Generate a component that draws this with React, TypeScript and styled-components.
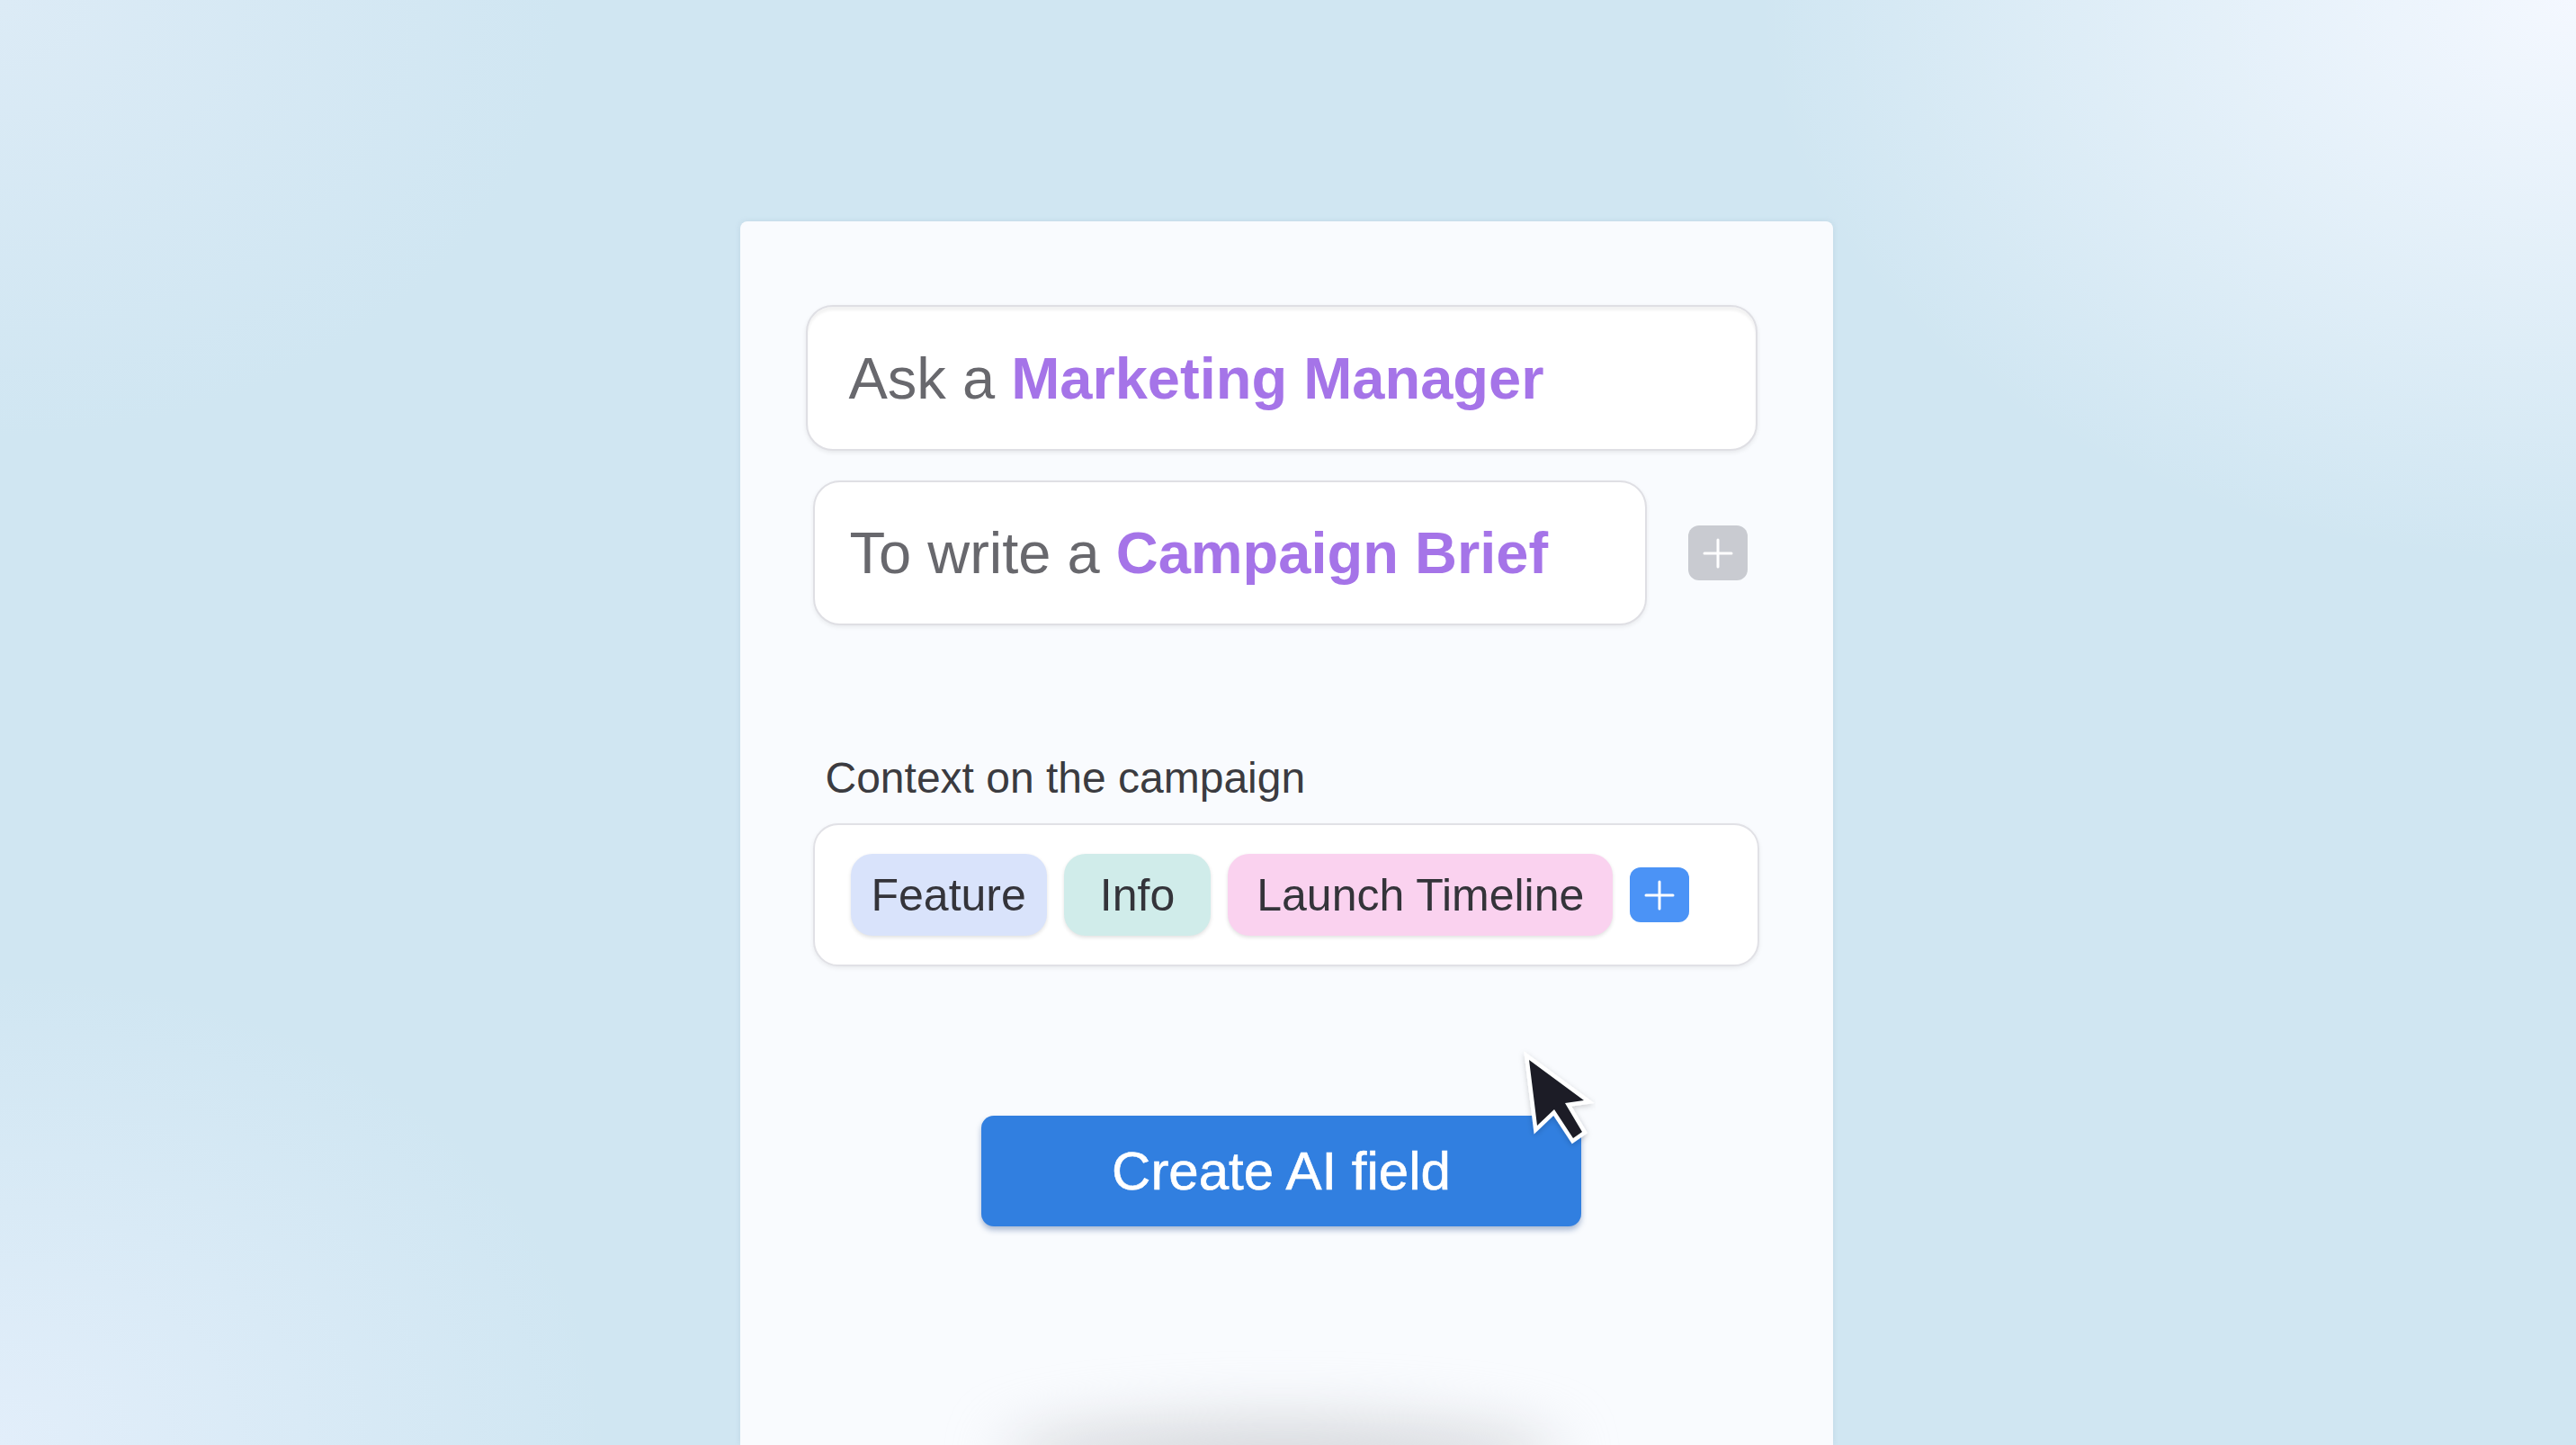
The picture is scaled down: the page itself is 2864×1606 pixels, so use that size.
import React from "react";
import styled, { createGlobalStyle } from "styled-components";

const GlobalStyle = createGlobalStyle`
  html, body {
    margin: 0;
    padding: 0;
    height: 100%;
  }
  body {
    overflow: hidden;
    font-family: "Liberation Sans", Arial, sans-serif;
  }
`;

const tags = [
  { label: "Feature", bg: "#d9e3fb", pad: 23 },
  { label: "Info", bg: "#d0ecea", pad: 40 },
  { label: "Launch Timeline", bg: "#fad2ef", pad: 32 },
];

const PlusIcon = ({ color }: { color: string }) => (
  <svg width="34" height="34" viewBox="0 0 34 34">
    <path d="M17 2v30M2 17h30" stroke={color} strokeWidth="3" strokeLinecap="round" />
  </svg>
);

const Cursor = () => (
  <svg width="140" height="150" viewBox="0 0 140 150">
    <defs>
      <filter id="cs" x="-20%" y="-20%" width="140%" height="140%">
        <feDropShadow dx="0" dy="2" stdDeviation="3" floodColor="#000" floodOpacity="0.18" />
      </filter>
    </defs>
    <path
      d="M39 37 L100 82 L79 85 L98 117 L88 124 L67 92 L48 110 Z"
      fill="#1b1f27"
      stroke="#ffffff"
      strokeWidth="9"
      strokeLinejoin="miter"
      paintOrder="stroke"
      filter="url(#cs)"
    />
  </svg>
);

const App = () => {
  return (
    <Page>
      <GlobalStyle />
      <Card>
        <Column>
          <PromptField inset pad={46}>
            <Muted>Ask a&nbsp;</Muted>
            <Accent>Marketing Manager</Accent>
          </PromptField>

          <SecondRow>
            <PromptField pad={39} grow>
              <Muted>To write a&nbsp;</Muted>
              <Accent>Campaign Brief</Accent>
            </PromptField>
            <SquareButton tone="#c9cbd1">
              <PlusIcon color="#ffffff" />
            </SquareButton>
          </SecondRow>

          <ContextLabel>Context on the campaign</ContextLabel>

          <TagBox>
            {tags.map((t) => (
              <Tag key={t.label} bg={t.bg} pad={t.pad}>
                {t.label}
              </Tag>
            ))}
            <SquareButton tone="#4b93f6">
              <PlusIcon color="#ffffff" />
            </SquareButton>
          </TagBox>

          <ButtonWrap>
            <CreateButton>Create AI field</CreateButton>
            <CursorLayer>
              <Cursor />
            </CursorLayer>
          </ButtonWrap>

          <FloorShadow />
        </Column>
      </Card>
    </Page>
  );
};

export default App;

const Page = styled.div`
  width: 2864px;
  height: 1606px;
  overflow: hidden;
  background:
    radial-gradient(ellipse 1300px 900px at 100% 0%, #f4f8ff 0%, rgba(240, 246, 254, 0) 70%),
    radial-gradient(ellipse 900px 700px at 0% 100%, #e2eefa 0%, rgba(226, 238, 250, 0) 75%),
    radial-gradient(ellipse 900px 700px at 0% 0%, #dcebf6 0%, rgba(220, 235, 246, 0) 70%),
    #d0e6f2;
  display: flex;
  justify-content: center;
`;

const Card = styled.div`
  margin-top: 246px;
  width: 1215px;
  height: 1360px;
  background-color: #f9fbfe;
  border-radius: 8px 8px 0 0;
  box-shadow: 0 0 6px rgba(120, 150, 170, 0.18);
  margin-left: -4px;
`;

const Column = styled.div`
  display: flex;
  flex-direction: column;
  padding: 93px 84px 0 73px;
`;

const PromptField = styled.div<{ inset?: boolean; pad: number; grow?: boolean }>`
  box-sizing: border-box;
  height: ${(p) => (p.inset ? "162px" : "161px")};
  display: flex;
  align-items: center;
  padding-left: ${(p) => p.pad}px;
  background-color: #ffffff;
  border: 2px solid #dfdfe4;
  border-radius: 30px;
  box-shadow: ${(p) =>
    p.inset
      ? "inset 0 4px 3px rgba(0, 0, 0, 0.05), 0 2px 5px rgba(0, 0, 0, 0.08)"
      : "0 2px 5px rgba(0, 0, 0, 0.07)"};
  font-size: 65px;
  white-space: nowrap;
  ${(p) => (p.grow ? "width: 927px;" : "")}
`;

const Muted = styled.span`
  color: #68686d;
`;

const Accent = styled.span`
  color: #a574e8;
  font-weight: 700;
`;

const SecondRow = styled.div`
  display: flex;
  align-items: center;
  gap: 46px;
  margin-top: 33px;
  margin-left: 8px;
`;

const SquareButton = styled.div<{ tone: string }>`
  width: 66px;
  height: 61px;
  border-radius: 12px;
  background-color: ${(p) => p.tone};
  display: flex;
  align-items: center;
  justify-content: center;
  flex-shrink: 0;
`;

const ContextLabel = styled.div`
  margin-top: 142px;
  margin-left: 22px;
  font-size: 48px;
  line-height: 56px;
  color: #3b3b40;
`;

const TagBox = styled.div`
  box-sizing: border-box;
  margin-top: 22px;
  margin-left: 8px;
  width: 1052px;
  height: 159px;
  display: flex;
  align-items: center;
  gap: 19px;
  padding-left: 40px;
  background-color: #ffffff;
  border: 2px solid #e1e1e6;
  border-radius: 28px;
  box-shadow: 0 2px 5px rgba(0, 0, 0, 0.07);
`;

const Tag = styled.div<{ bg: string; pad: number }>`
  height: 91px;
  display: flex;
  align-items: center;
  padding: 0 ${(p) => p.pad}px;
  border-radius: 24px;
  background-color: ${(p) => p.bg};
  box-shadow: 0 2px 4px rgba(0, 0, 0, 0.12);
  font-size: 50px;
  color: #34343a;
  white-space: nowrap;
`;

const ButtonWrap = styled.div`
  position: relative;
  align-self: center;
  margin-top: 166px;
`;

const CreateButton = styled.div`
  width: 667px;
  height: 123px;
  border-radius: 14px;
  background-color: #317fe0;
  box-shadow: 0 4px 6px rgba(20, 60, 130, 0.35);
  display: flex;
  align-items: center;
  justify-content: center;
  color: #ffffff;
  font-size: 60px;
  -webkit-text-stroke: 0.6px #ffffff;
`;

const CursorLayer = styled.div`
  position: absolute;
  left: 570px;
  top: -99px;
  width: 140px;
  height: 150px;
`;

const FloorShadow = styled.div`
  align-self: center;
  margin-top: 215px;
  width: 620px;
  height: 80px;
  border-radius: 50%;
  background-color: #d6d8dc;
  filter: blur(32px);
`;
